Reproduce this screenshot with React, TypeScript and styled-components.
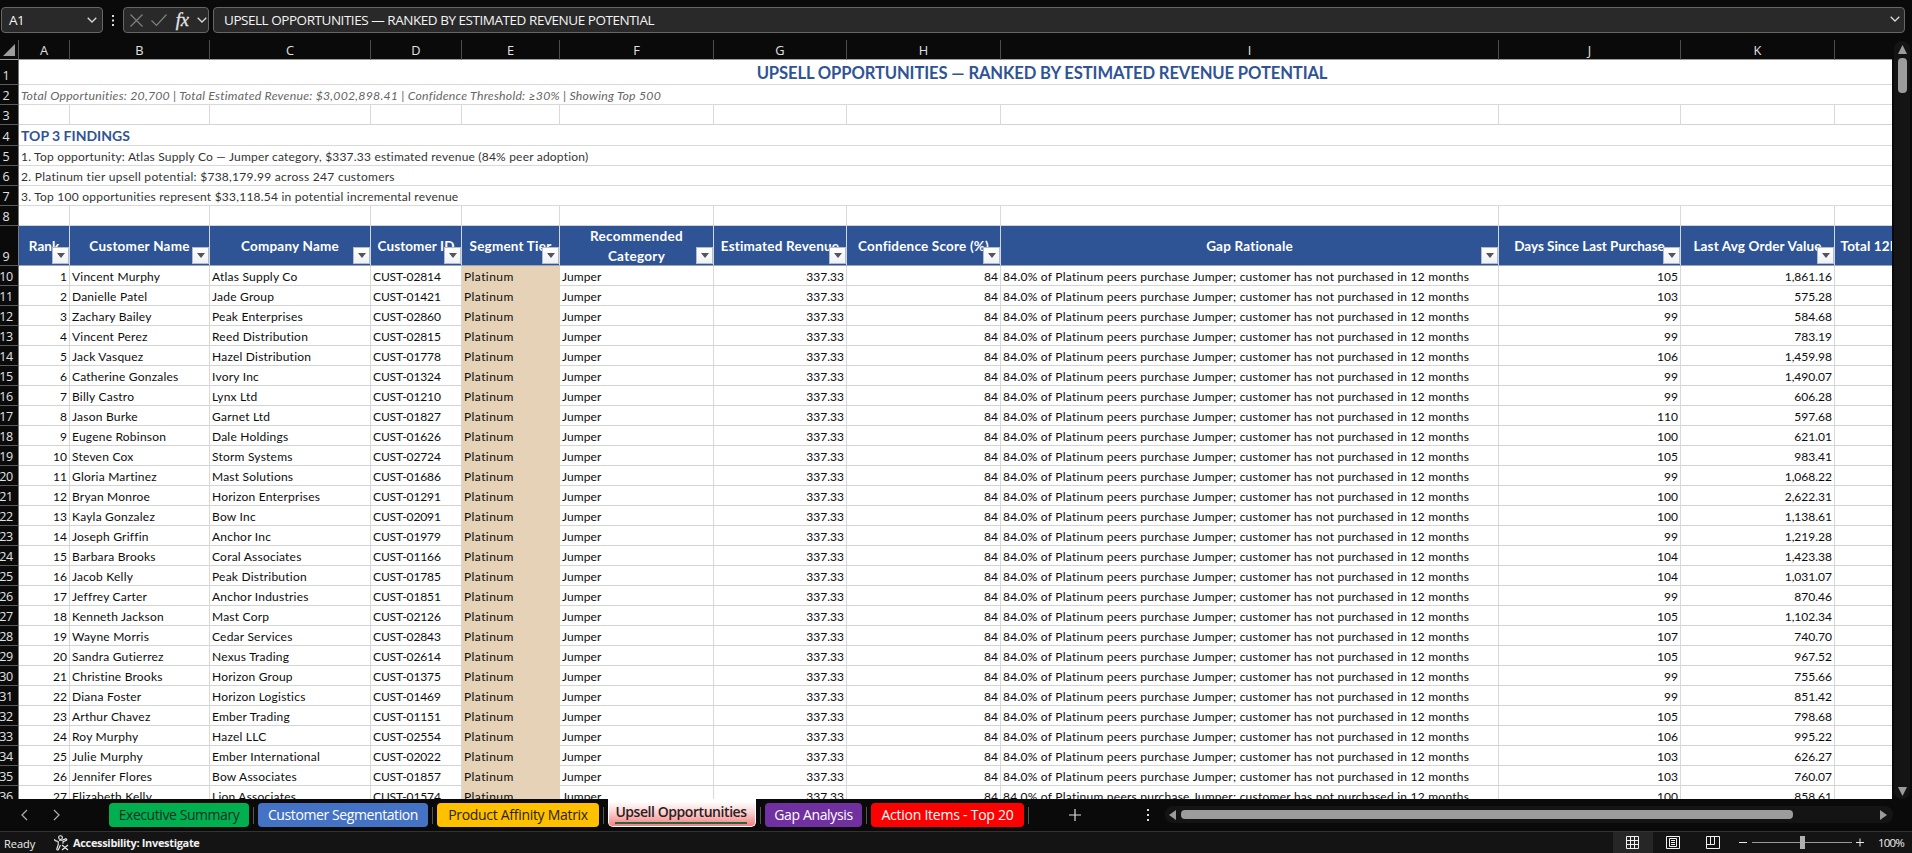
import React from "react";
import styled, { createGlobalStyle } from "styled-components";

const GlobalStyle = createGlobalStyle`
  * { box-sizing: border-box; }
  body { margin: 0; background: #0a0a0a; overflow: hidden; }
`;

const uiFont = `"Open Sans", "Noto Sans", sans-serif`;
const cellFont = `Lato, "Open Sans", sans-serif`;

const Window = styled.div`
  width: 1912px;
  height: 853px;
  display: flex;
  flex-direction: column;
  background: #0a0a0a;
  color: #e8e8e8;
  font-family: ${uiFont};
  overflow: hidden;
`;

/* Formula bar */
const FormulaBar = styled.div`
  flex: none;
  height: 40px;
  padding: 7px 7px 7px 1px;
  display: flex;
`;
const Field = styled.div<{ $width?: number }>`
  ${(p) => (p.$width ? `width: ${p.$width}px; flex: none;` : "flex: 1;")}
  height: 26px;
  display: flex;
  align-items: center;
  border: 1px solid #666;
  border-radius: 4px;
  background: #292929;
`;
const NameText = styled.span`
  flex: 1;
  padding-left: 7px;
  font-size: 13.5px;
  line-height: 24px;
  letter-spacing: -0.6px;
  color: #f4f4f4;
`;
const FormulaText = styled.span`
  flex: 1;
  padding-left: 10px;
  font-size: 13.5px;
  line-height: 24px;
  letter-spacing: -0.46px;
  white-space: nowrap;
  color: #f4f4f4;
`;
const DotsGap = styled.div<{ $width: number }>`
  width: ${(p) => p.$width}px;
  flex: none;
  display: flex;
  align-items: center;
  justify-content: center;
`;
const FxText = styled.span`
  width: 18px;
  text-align: center;
  font: italic 18.5px/22px "Liberation Serif", serif;
  -webkit-text-stroke: 0.3px #e6e6e6;
  color: #e6e6e6;
`;
const FieldIcons = styled.div`
  flex: 1;
  display: flex;
  align-items: center;
  justify-content: space-between;
  padding: 0 1px 0 5px;
`;
const ChevronSlot = styled.div<{ $right: number; $up?: number }>`
  display: flex;
  padding-right: ${(p) => p.$right}px;
  padding-bottom: ${(p) => p.$up ?? 0}px;
`;

/* Sheet */
const SheetArea = styled.div`
  flex: none;
  height: 759px;
  display: flex;
`;
const Sheet = styled.div`
  width: 1892px;
  flex: none;
  overflow: hidden;
  display: flex;
  flex-direction: column;
`;
const Row = styled.div<{ $h: number }>`
  flex: none;
  height: ${(p) => p.$h}px;
  display: flex;
`;
const Corner = styled.div`
  width: 19px;
  flex: none;
  display: flex;
  align-items: flex-end;
  justify-content: flex-end;
  padding: 0 3px 3px 0;
  border-right: 1px solid #555;
  border-bottom: 1px solid #9a9a9a;
`;
const ColumnHead = styled.div<{ $w: number }>`
  width: ${(p) => p.$w}px;
  flex: none;
  text-align: center;
  font-size: 12.8px;
  line-height: 21px;
  color: #e2e2e2;
  border-right: 1px solid #4c4c4c;
  border-bottom: 1px solid #9a9a9a;
`;
const RowHead = styled.div`
  width: 19px;
  flex: none;
  display: flex;
  align-items: flex-end;
  justify-content: center;
  background: #0a0a0a;
  border-right: 1px solid #777;
  border-bottom: 1px solid #5c5c5c;
  padding-right: 6px;
  font-size: 12.5px;
  line-height: 17px;
  letter-spacing: -0.3px;
  color: #e2e2e2;
`;
const Cell = styled.div<{ $w: number; $align?: string; $tint?: boolean; $ls?: number }>`
  width: ${(p) => p.$w}px;
  flex: none;
  overflow: hidden;
  white-space: nowrap;
  padding: 2px 2px 0 2px;
  text-align: ${(p) => p.$align ?? "left"};
  background: ${(p) => (p.$tint ? "#e6d3b7" : "#fff")};
  border-right: 1px solid ${(p) => (p.$tint ? "#e6d3b7" : "#d9d9d9")};
  border-bottom: 1px solid ${(p) => (p.$tint ? "#e4d2b9" : "#d4d4d4")};
  font-family: ${cellFont};
  font-size: 12px;
  line-height: 18px;
  letter-spacing: ${(p) => p.$ls ?? 0}px;
  color: #0c0c0c;
`;
const Merged = styled.div<{ $kind: "title" | "meta" | "heading" | "finding"; $ls?: number }>`
  width: 2046px;
  flex: none;
  padding: 0 2px;
  background: #fff;
  border-bottom: 1px solid #d9d9d9;
  white-space: nowrap;
  font-family: ${cellFont};
  letter-spacing: ${(p) => p.$ls ?? 0}px;
  ${(p) =>
    ({
      title: "text-align: center; font-size: 16.6px; font-weight: 700; line-height: 27px; color: #2f5496;",
      meta: "font-size: 12.3px; font-style: italic; line-height: 22px; color: #666;",
      heading: "font-size: 14px; font-weight: 700; line-height: 21px; color: #2f5496;",
      finding: "font-size: 12px; line-height: 22px; color: #333;",
    })[p.$kind]}
`;
const TableHead = styled.div<{ $w: number; $ls: number }>`
  position: relative;
  width: ${(p) => p.$w}px;
  flex: none;
  display: flex;
  align-items: center;
  justify-content: center;
  overflow: hidden;
  white-space: pre;
  text-align: center;
  background: #2f5496;
  border-right: 1px solid #d0d6e2;
  border-bottom: 1px solid #9aa5b8;
  font-family: ${cellFont};
  font-weight: 700;
  font-size: 13.5px;
  letter-spacing: ${(p) => p.$ls}px;
  line-height: 20px;
  color: #fff;
`;
const FilterButton = styled.div`
  position: absolute;
  right: 0;
  bottom: 1px;
  width: 17px;
  height: 17px;
  display: flex;
  align-items: center;
  justify-content: center;
  background: linear-gradient(#fff, #eef1f6);
  border: 1px solid #b4bccb;
`;

/* Vertical scrollbar */
const VScroll = styled.div`
  width: 16px;
  margin: 1px 0 0 2px;
  height: 758px;
  display: flex;
  flex-direction: column;
  align-items: center;
  background: #141414;
  border-radius: 8px;
  padding: 4px 0 3px;
`;
const VThumb = styled.div`
  width: 9px;
  height: 35px;
  margin-top: 4px;
  border-radius: 4px;
  background: #9c9c9c;
`;
const Spring = styled.div`
  flex: 1;
`;

/* Tabs */
const TabBar = styled.div`
  flex: none;
  height: 32px;
  display: flex;
  align-items: flex-start;
`;
const NavArrows = styled.div`
  width: 109px;
  height: 32px;
  display: flex;
  gap: 25px;
  padding: 10px 0 0 21px;
`;
const Tab = styled.div<{ $w: number; $bg: string; $fg: string; $ls: number }>`
  width: ${(p) => p.$w}px;
  flex: none;
  height: 24px;
  margin-top: 4px;
  border-radius: 4px;
  background: ${(p) => p.$bg};
  color: ${(p) => p.$fg};
  text-align: center;
  font-size: 14px;
  line-height: 24px;
  letter-spacing: ${(p) => p.$ls}px;
  white-space: nowrap;
`;
const ActiveTab = styled.div`
  width: 148px;
  flex: none;
  height: 28px;
  display: flex;
  justify-content: center;
  align-items: flex-start;
  padding-right: 2px;
  background: linear-gradient(#fff 10%, #fbd0d0 50%, #f47f7f);
  border: 1px solid #fff;
  border-top: 0;
  border-radius: 0 0 5px 5px;
`;
const ActiveLabel = styled.span`
  height: 25px;
  border-bottom: 2px solid #27663f;
  font-size: 14px;
  font-weight: 600;
  line-height: 26px;
  letter-spacing: -0.44px;
  white-space: nowrap;
  color: #2c2020;
`;
const Separator = styled.div`
  width: 1px;
  height: 17px;
  flex: none;
  margin: 8px 4px 0;
  background: #555;
`;
const PlusSlot = styled.div`
  width: 84px;
  height: 31px;
  display: flex;
  justify-content: center;
  padding-top: 10px;
`;
const HScroll = styled.div`
  width: 728px;
  height: 17px;
  margin: 7px 0 0 9px;
  border-radius: 8px;
  background: #141414;
  display: flex;
  align-items: center;
  padding: 0 6px 0 4px;
`;
const HThumb = styled.div`
  width: 612px;
  height: 9px;
  margin-left: 5px;
  border-radius: 4px;
  background: #9c9c9c;
`;

/* Status bar */
const StatusBar = styled.div`
  flex: none;
  height: 22px;
  display: flex;
  align-items: stretch;
  background: #141414;
  border-top: 1px solid #333;
  font-size: 11px;
  line-height: 21px;
  color: #f0f0f0;
`;
const Ready = styled.span`
  width: 54px;
  padding-left: 4px;
  padding-top: 1px;
  letter-spacing: 0;
`;
const Access = styled.span`
  flex: 1;
  display: flex;
  align-items: center;
  gap: 4px;
  font-weight: 700;
  letter-spacing: -0.33px;
`;
const ViewButton = styled.div<{ $on?: boolean }>`
  width: 40px;
  display: flex;
  align-items: center;
  justify-content: center;
  padding-right: 1px;
  background: ${(p) => (p.$on ? "#262626" : "transparent")};
`;
const ZoomControl = styled.div`
  width: 140px;
  display: flex;
  align-items: center;
  padding-left: 5px;
`;
const ZoomText = styled.span`
  width: 39px;
  padding-left: 5px;
  font-size: 11.5px;
  letter-spacing: -0.8px;
`;

const Chevron = ({ w = 10, color = "#d8d8d8" }: { w?: number; color?: string }) => (
  <svg width={w} height="6" viewBox="0 0 10 6" fill="none" stroke={color} strokeWidth="1.3">
    <path d="M.7.7 5 5 9.3.7" />
  </svg>
);
const VDots = () => (
  <svg width="4" height="13" fill="#dcdcdc">
    <path d="M1 1h2v2H1zM1 5.5h2v2H1zM1 10h2v2H1z" />
  </svg>
);
const Arrow = ({ d, w, h }: { d: string; w: number; h: number }) => (
  <svg width={w} height={h} fill="#9c9c9c">
    <path d={d} />
  </svg>
);

const columns: [string, number][] = [
  ["A", 51], ["B", 140], ["C", 161], ["D", 91], ["E", 98], ["F", 154],
  ["G", 133], ["H", 154], ["I", 498], ["J", 182], ["K", 154], ["", 130],
];
const heads: [string, number][] = [
  ["Rank", 0.05], ["Customer Name", 0.24], ["Company Name", 0.22], ["Customer ID", 0.1],
  ["Segment Tier", 0.2], ["Recommended\nCategory", 0.3], ["Estimated Revenue", 0.2],
  ["Confidence Score (%)", 0.2], ["Gap Rationale", 0.2], ["Days Since Last Purchase", -0.03],
  ["Last Avg Order Value", 0.14], ["Total 12M Revenue", 0.1],
];
const rightAligned = [0, 6, 7, 9, 10];
const tracking = [0, 0.22, 0.22, -0.12, 0.42, 0.08, 0, 0, 0.24, 0, 0, 0];

const customers: [string, string, string, string, string][] = [
  ["Vincent Murphy", "Atlas Supply Co", "02814", "105", "1,861.16"],
  ["Danielle Patel", "Jade Group", "01421", "103", "575.28"],
  ["Zachary Bailey", "Peak Enterprises", "02860", "99", "584.68"],
  ["Vincent Perez", "Reed Distribution", "02815", "99", "783.19"],
  ["Jack Vasquez", "Hazel Distribution", "01778", "106", "1,459.98"],
  ["Catherine Gonzales", "Ivory Inc", "01324", "99", "1,490.07"],
  ["Billy Castro", "Lynx Ltd", "01210", "99", "606.28"],
  ["Jason Burke", "Garnet Ltd", "01827", "110", "597.68"],
  ["Eugene Robinson", "Dale Holdings", "01626", "100", "621.01"],
  ["Steven Cox", "Storm Systems", "02724", "105", "983.41"],
  ["Gloria Martinez", "Mast Solutions", "01686", "99", "1,068.22"],
  ["Bryan Monroe", "Horizon Enterprises", "01291", "100", "2,622.31"],
  ["Kayla Gonzalez", "Bow Inc", "02091", "100", "1,138.61"],
  ["Joseph Griffin", "Anchor Inc", "01979", "99", "1,219.28"],
  ["Barbara Brooks", "Coral Associates", "01166", "104", "1,423.38"],
  ["Jacob Kelly", "Peak Distribution", "01785", "104", "1,031.07"],
  ["Jeffrey Carter", "Anchor Industries", "01851", "99", "870.46"],
  ["Kenneth Jackson", "Mast Corp", "02126", "105", "1,102.34"],
  ["Wayne Morris", "Cedar Services", "02843", "107", "740.70"],
  ["Sandra Gutierrez", "Nexus Trading", "02614", "105", "967.52"],
  ["Christine Brooks", "Horizon Group", "01375", "99", "755.66"],
  ["Diana Foster", "Horizon Logistics", "01469", "99", "851.42"],
  ["Arthur Chavez", "Ember Trading", "01151", "105", "798.68"],
  ["Roy Murphy", "Hazel LLC", "02554", "106", "995.22"],
  ["Julie Murphy", "Ember International", "02022", "103", "626.27"],
  ["Jennifer Flores", "Bow Associates", "01857", "103", "760.07"],
  ["Elizabeth Kelly", "Lion Associates", "01574", "100", "858.61"],
];
const rationale = "84.0% of Platinum peers purchase Jumper; customer has not purchased in 12 months";

const BlankRow = ({ n }: { n: number }) => (
  <Row $h={20}>
    <RowHead>{n}</RowHead>
    {columns.map(([c, w], i) => <Cell key={i} $w={w} />)}
  </Row>
);

export default function App() {
  return (
    <Window>
      <GlobalStyle />
      <FormulaBar>
        <Field $width={102}>
          <NameText>A1</NameText>
          <ChevronSlot $right={5}><Chevron /></ChevronSlot>
        </Field>
        <DotsGap $width={20}><VDots /></DotsGap>
        <Field $width={86}>
          <FieldIcons>
            <svg width="15" height="15" stroke="#808080" strokeWidth="1.2" fill="none"><path d="M1.5 1.5l12 12M13.5 1.5l-12 12" /></svg>
            <svg width="18" height="14" stroke="#808080" strokeWidth="1.2" fill="none"><path d="M1.5 7.5l5 5L16.500 1.500" /></svg>
            <FxText>fx</FxText>
            <Chevron />
          </FieldIcons>
        </Field>
        <DotsGap $width={4} />
        <Field>
          <FormulaText>UPSELL OPPORTUNITIES — RANKED BY ESTIMATED REVENUE POTENTIAL</FormulaText>
          <ChevronSlot $right={4} $up={3}><Chevron /></ChevronSlot>
        </Field>
      </FormulaBar>

      <SheetArea>
        <Sheet>
          <Row $h={20}>
            <Corner><Arrow w={12} h={12} d="M12 0v12H0z" /></Corner>
            {columns.map(([c, w], i) => <ColumnHead key={i} $w={w}>{c}</ColumnHead>)}
          </Row>
          <Row $h={25}>
            <RowHead>1</RowHead>
            <Merged $kind="title" $ls={-0.12}>UPSELL OPPORTUNITIES — RANKED BY ESTIMATED REVENUE POTENTIAL</Merged>
          </Row>
          <Row $h={20}>
            <RowHead>2</RowHead>
            <Merged $kind="meta" $ls={0.22}>Total Opportunities: 20,700 | Total Estimated Revenue: $3,002,898.41 | Confidence Threshold: ≥30% | Showing Top 500</Merged>
          </Row>
          <BlankRow n={3} />
          <Row $h={21}>
            <RowHead>4</RowHead>
            <Merged $kind="heading">TOP 3 FINDINGS</Merged>
          </Row>
          <Row $h={20}>
            <RowHead>5</RowHead>
            <Merged $kind="finding" $ls={0.2}>1. Top opportunity: Atlas Supply Co — Jumper category, $337.33 estimated revenue (84% peer adoption)</Merged>
          </Row>
          <Row $h={20}>
            <RowHead>6</RowHead>
            <Merged $kind="finding" $ls={0.28}>2. Platinum tier upsell potential: $738,179.99 across 247 customers</Merged>
          </Row>
          <Row $h={20}>
            <RowHead>7</RowHead>
            <Merged $kind="finding" $ls={0.23}>3. Top 100 opportunities represent $33,118.54 in potential incremental revenue</Merged>
          </Row>
          <BlankRow n={8} />
          <Row $h={40}>
            <RowHead>9</RowHead>
            {heads.map(([label, ls], i) => (
              <TableHead key={label} $w={columns[i][1]} $ls={ls}>
                {label}
                <FilterButton><svg width="8" height="5" fill="#555"><path d="M0 0h8L4 5z" /></svg></FilterButton>
              </TableHead>
            ))}
          </Row>
          {customers.map(([name, company, id, days, value], r) => (
            <Row $h={20} key={id}>
              <RowHead>{r + 10}</RowHead>
              {[r + 1, name, company, `CUST-${id}`, "Platinum", "Jumper", "337.33", "84", rationale, days, value, ""].map((v, i) => (
                <Cell key={i} $w={columns[i][1]} $align={rightAligned.includes(i) ? "right" : "left"} $tint={i === 4} $ls={tracking[i]}>{v}</Cell>
              ))}
            </Row>
          ))}
        </Sheet>
        <VScroll>
          <Arrow w={9} h={9} d="M4.500 0 9 9H0z" />
          <VThumb />
          <Spring />
          <Arrow w={9} h={9} d="M4.500 9 9 0H0z" />
        </VScroll>
      </SheetArea>

      <TabBar>
        <NavArrows>
          <svg width="7" height="12" fill="none" stroke="#aaa" strokeWidth="1.3"><path d="M6 1 1 6l5 5" /></svg>
          <svg width="7" height="12" fill="none" stroke="#aaa" strokeWidth="1.3"><path d="M1 1l5 5-5 5" /></svg>
        </NavArrows>
        <Tab $w={140} $bg="#00b050" $fg="#12331f" $ls={-0.43}>Executive Summary</Tab>
        <Separator />
        <Tab $w={170} $bg="#4472c4" $fg="#fff" $ls={-0.4}>Customer Segmentation</Tab>
        <Separator />
        <Tab $w={162} $bg="#ffc000" $fg="#2c2409" $ls={-0.3}>Product Affinity Matrix</Tab>
        <Separator />
        <ActiveTab><ActiveLabel>Upsell Opportunities</ActiveLabel></ActiveTab>
        <Separator />
        <Tab $w={97} $bg="#7030a0" $fg="#fff" $ls={-0.34}>Gap Analysis</Tab>
        <Separator />
        <Tab $w={153} $bg="#ff0000" $fg="#fff" $ls={-0.24}>Action Items - Top 20</Tab>
        <Separator />
        <PlusSlot><svg width="12" height="12" stroke="#ddd" strokeWidth="1.2"><path d="M6 0v12M0 6h12" /></svg></PlusSlot>
        <Spring />
        <DotsGap $width={17}><svg width="4" height="31" fill="#dcdcdc"><path d="M1 10h2v2H1zM1 15h2v2H1zM1 20h2v2H1z" /></svg></DotsGap>
        <HScroll>
          <Arrow w={7} h={10} d="M7 0v10L0 5z" />
          <HThumb />
          <Spring />
          <Arrow w={7} h={10} d="M0 0v10l7-5z" />
        </HScroll>
        <DotsGap $width={19} />
      </TabBar>

      <StatusBar>
        <Ready>Ready</Ready>
        <Access>
          <svg width="15" height="16" fill="none" stroke="#eee" strokeWidth="1.1">
            <circle cx="6.500" cy="2.600" r="1.900" />
            <path d="M1 4.200c-.8 1 .2 1.500 1 1.700l2.200.7v3L2.800 14c-.2 1 1.200 1.400 1.600.5L6.500 10M5 5.200h3l3.600-1.300c1.200-.3 1.500 1.200.5 1.600L9 6.700v2M8 10l6 5M14 10l-6 5" />
          </svg>
          Accessibility: Investigate
        </Access>
        <ViewButton $on>
          <svg width="13" height="13" fill="none" stroke="#f2f2f2"><path d="M.5.5h12v12H.5zM4.500.5v12M8.500.5v12M.5 4.500h12M.5 8.500h12" /></svg>
        </ViewButton>
        <ViewButton>
          <svg width="14" height="13" fill="none" stroke="#f2f2f2"><path d="M.5.5h13v12H.5zM3.500 2.500h7v8h-7zM5 4.500h4M5 6.500h4M5 8.500h4" /></svg>
        </ViewButton>
        <ViewButton>
          <svg width="14" height="13" fill="none" stroke="#f2f2f2"><path d="M.5.5h13v12H.5zM4.500.5v8M8.500.5v8h-8" /></svg>
        </ViewButton>
        <ZoomControl>
          <svg width="130" height="15" stroke="#e8e8e8">
            <path d="M1 7.500h8M118 7.500h8M122 3.500v8" />
            <path d="M14 7.500h100" stroke="#999" />
            <path d="M62 1h5v13h-5z" fill="#b0b0b0" stroke="none" />
          </svg>
        </ZoomControl>
        <ZoomText>100%</ZoomText>
      </StatusBar>
    </Window>
  );
}
